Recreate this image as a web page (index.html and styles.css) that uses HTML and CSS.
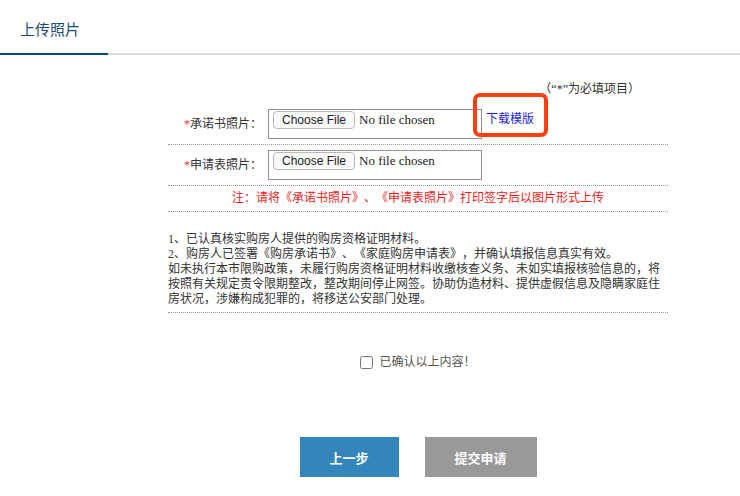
FILE: index.html
```html
<!DOCTYPE html>
<html lang="zh-CN">
<head>
<meta charset="utf-8">
<title>上传照片</title>
<link rel="stylesheet" href="styles.css">
</head>
<body>
<div class="tabs">
  <div class="tab">上传照片</div>
</div>
<div class="form">
  <div class="req">（“*”为必填项目）</div>
  <div class="row">
    <div class="label"><span class="star">*</span>承诺书照片：</div>
    <div class="filebox"><input type="file" class="file"></div>
    <a class="dl" href="#">下载模版</a>
    <div class="mark"></div>
  </div>
  <div class="row">
    <div class="label"><span class="star">*</span>申请表照片：</div>
    <div class="filebox"><input type="file" class="file"></div>
  </div>
  <div class="note">注：请将《承诺书照片》、《申请表照片》打印签字后以图片形式上传</div>
  <div class="terms">1、已认真核实购房人提供的购房资格证明材料。<br>2、购房人已签署《购房承诺书》、《家庭购房申请表》，并确认填报信息真实有效。<br>如未执行本市限购政策，未履行购房资格证明材料收缴核查义务、未如实填报核验信息的，将<br>按照有关规定责令限期整改，整改期间停止网签。协助伪造材料、提供虚假信息及隐瞒家庭住<br>房状况，涉嫌构成犯罪的，将移送公安部门处理。</div>
  <label class="confirm"><input type="checkbox" class="chk">已确认以上内容！</label>
  <div class="actions">
    <button class="btn btn-prev">上一步</button>
    <button class="btn btn-submit">提交申请</button>
  </div>
</div>
</body>
</html>
```

FILE: styles.css
```css
* { box-sizing: border-box; }
body {
  margin: 0;
  background: #fff;
  font-family: "Liberation Serif", "Noto Sans CJK SC", serif;
  font-size: 12px;
  color: #333;
  text-spacing-trim: space-all;
}
.tabs {
  display: flex;
  height: 55px;
  border-bottom: 2px solid #dcdcdc;
}
.tab {
  width: 108px;
  height: 55px;
  padding: 20px 0 0 20px;
  margin-bottom: -2px;
  border-bottom: 2px solid #0b4a78;
  font-family: "Noto Sans CJK SC", sans-serif;
  font-size: 15px;
  line-height: 18px;
  color: #1c4a75;
}
.form {
  width: 500px;
  margin-left: 168px;
}
.req {
  margin-top: 27px;
  margin-bottom: 8px;
  line-height: 14px;
  text-align: right;
  padding-right: 28px;
  color: #333;
}
.row {
  position: relative;
  display: flex;
  align-items: flex-start;
  padding: 5px 0;
  border-bottom: 1px dotted #999;
}
.label {
  width: 100px;
  padding-right: 6px;
  height: 30px;
  line-height: 30px;
  text-align: right;
  color: #333;
}
.star { color: #f33; }
.filebox {
  width: 214px;
  height: 30px;
  border: 1px solid #8f8f8f;
  padding: 1px 0 0 4px;
  overflow: hidden;
}
.file {
  font-family: "Liberation Serif", serif;
  font-size: 13px;
  color: #222;
}
.file::file-selector-button {
  font-family: "Liberation Sans", sans-serif;
  font-size: 12px;
  height: 18px;
  padding: 0 8px;
  margin-right: 4px;
  border: 1px solid #b9b9b9;
  border-radius: 4px;
  background: #fafafa;
  color: #222;
}
.dl {
  margin-left: 4px;
  margin-top: 3px;
  line-height: 15px;
  color: #1f1fe6;
  text-decoration: none;
}
.mark {
  position: absolute;
  left: 305px;
  top: -11px;
  width: 75px;
  height: 44px;
  border: 4px solid #fd3e12;
  border-radius: 7px;
}
.note {
  padding: 5px 0;
  line-height: 15px;
  text-align: center;
  color: #f51c1c;
  border-bottom: 1px dotted #999;
}
.terms {
  margin-top: 20px;
  padding-bottom: 5px;
  line-height: 15px;
  white-space: nowrap;
  color: #333;
  border-bottom: 1px dotted #999;
}
.confirm {
  display: flex;
  align-items: center;
  justify-content: center;
  margin-top: 42px;
  line-height: 15px;
  color: #555;
}
.chk {
  width: 13px;
  height: 13px;
  margin: 0 6px 0 0;
}
.actions {
  display: flex;
  justify-content: center;
  gap: 26px;
  margin-top: 67px;
}
.btn {
  height: 40px;
  border: none;
  color: #fff;
  font-family: "Noto Sans CJK SC", sans-serif;
  font-size: 13px;
  font-weight: bold;
}
.btn-prev { width: 99px; background: #3385bb; }
.btn-submit { width: 112px; background: #999; }
```
